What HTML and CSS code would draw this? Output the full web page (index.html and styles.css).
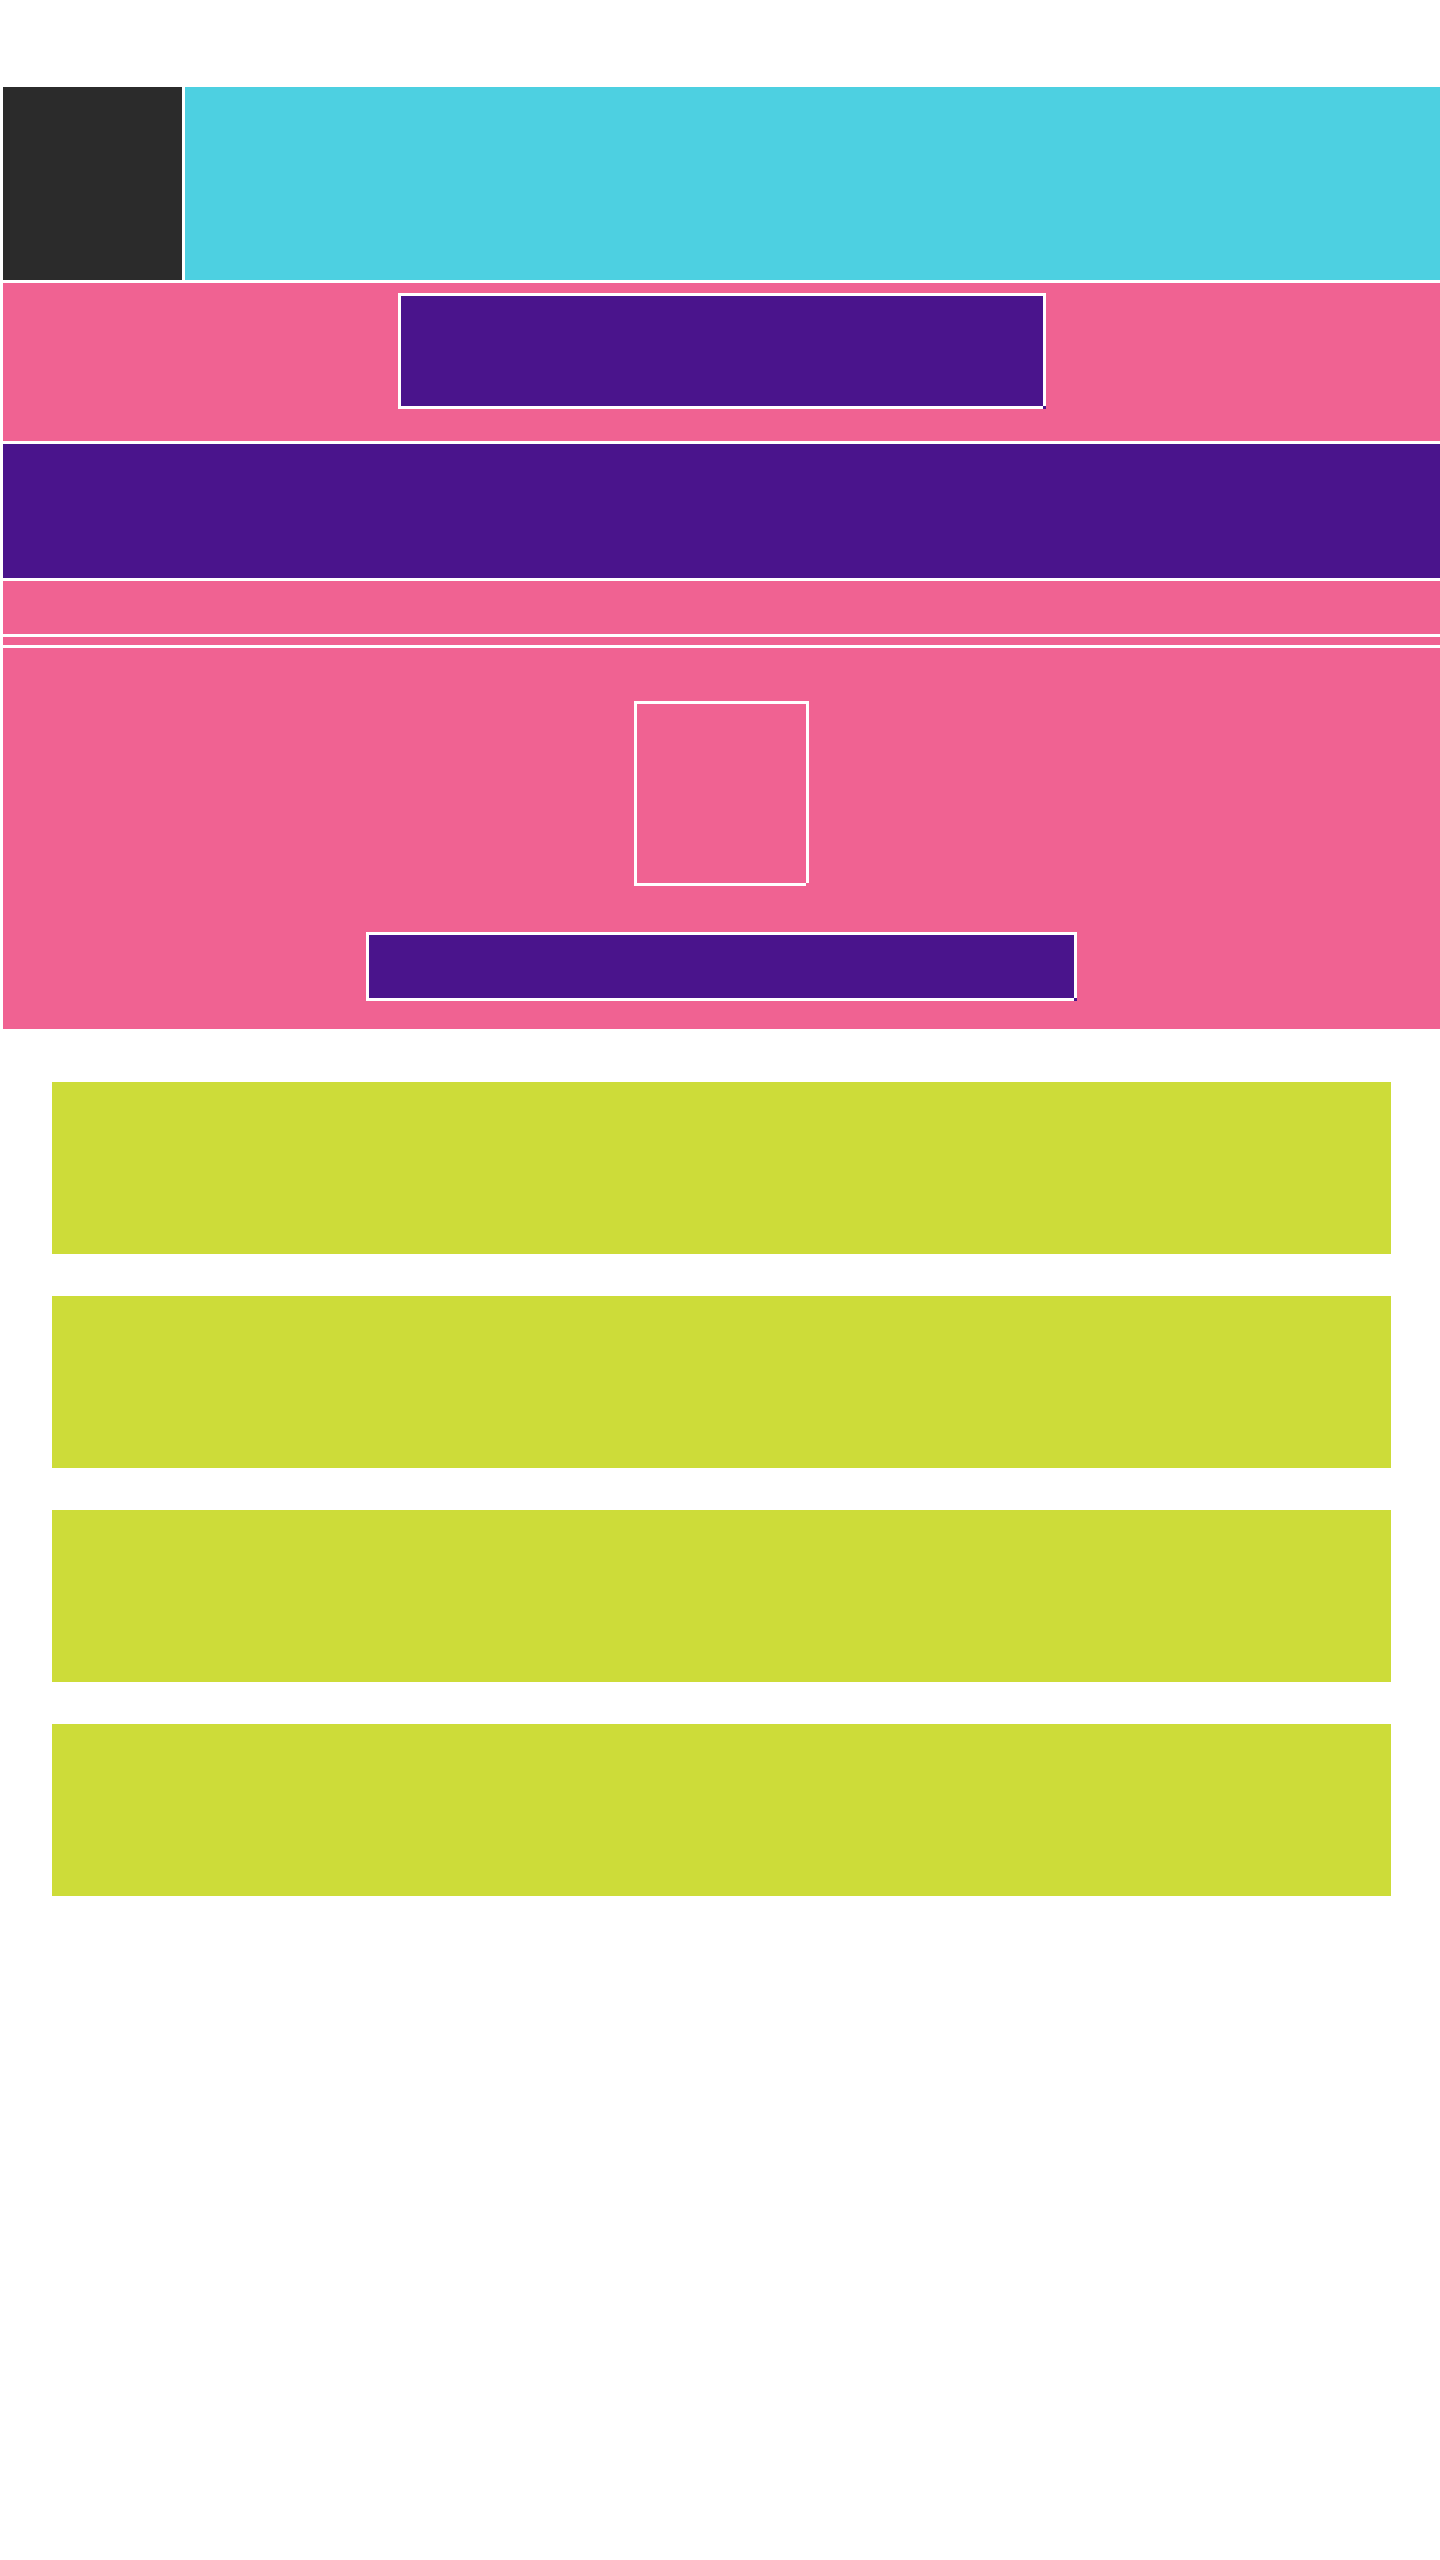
FILE: index.html
```html
<!DOCTYPE html>
<html lang="en">
<head>
<meta charset="utf-8">
<title>Layout</title>
<link rel="stylesheet" href="styles.css">
</head>
<body>
<div class="page">
  <header class="header">
    <div class="logo"></div>
    <div class="banner"></div>
  </header>
  <main class="stack">
    <section class="hero">
      <div class="hero-box frame"></div>
    </section>
    <section class="band"></section>
    <section class="strip"></section>
    <section class="thin"></section>
    <section class="feature">
      <div class="feature-square frame"></div>
      <div class="feature-button frame"></div>
    </section>
  </main>
  <section class="cards">
    <div class="card"></div>
    <div class="card"></div>
    <div class="card"></div>
    <div class="card"></div>
  </section>
</div>
</body>
</html>
```
FILE: styles.css
```css
html, body {
  margin: 0;
  padding: 0;
  background: #ffffff;
  font-family: "Liberation Sans", Arial, sans-serif;
}

.page {
  padding: 87px 0 0 3px;
  min-height: 2560px;
  box-sizing: border-box;
}

.header {
  display: flex;
  gap: 3px;
  height: 193px;
}

.logo {
  width: 179px;
  flex: none;
  background: #2b2b2b;
}

.banner {
  flex: 1;
  background: #4dd0e1;
}

.stack {
  display: flex;
  flex-direction: column;
  gap: 3px;
  margin-top: 3px;
}

.frame {
  background:
    linear-gradient(#fff, #fff) left top / 100% 3px no-repeat,
    linear-gradient(#fff, #fff) left top / 3px 100% no-repeat,
    linear-gradient(#fff, #fff) right top / 3px calc(100% - 3px) no-repeat,
    linear-gradient(#fff, #fff) left bottom / calc(100% - 3px) 3px no-repeat;
  box-sizing: border-box;
}

.hero {
  height: 158px;
  background: #f06292;
  display: flex;
  justify-content: center;
  align-items: flex-start;
  padding-top: 10px;
  box-sizing: border-box;
}

.hero-box {
  width: 648px;
  height: 116px;
  background-color: #4a148c;
}

.band {
  height: 134px;
  background: #4a148c;
}

.strip {
  height: 53px;
  background: #f06292;
}

.thin {
  height: 8px;
  background: #f06292;
}

.feature {
  height: 381px;
  background: #f06292;
  display: flex;
  flex-direction: column;
  align-items: center;
  padding-top: 53px;
  box-sizing: border-box;
}

.feature-square {
  width: 175px;
  height: 185px;
  background-color: #f06292;
}

.feature-button {
  width: 711px;
  height: 69px;
  margin-top: 46px;
  background-color: #4a148c;
}

.cards {
  display: flex;
  flex-direction: column;
  gap: 42px;
  margin-top: 53px;
  padding: 0 49px;
}

.card {
  height: 172px;
  background: #cddc39;
}
```
